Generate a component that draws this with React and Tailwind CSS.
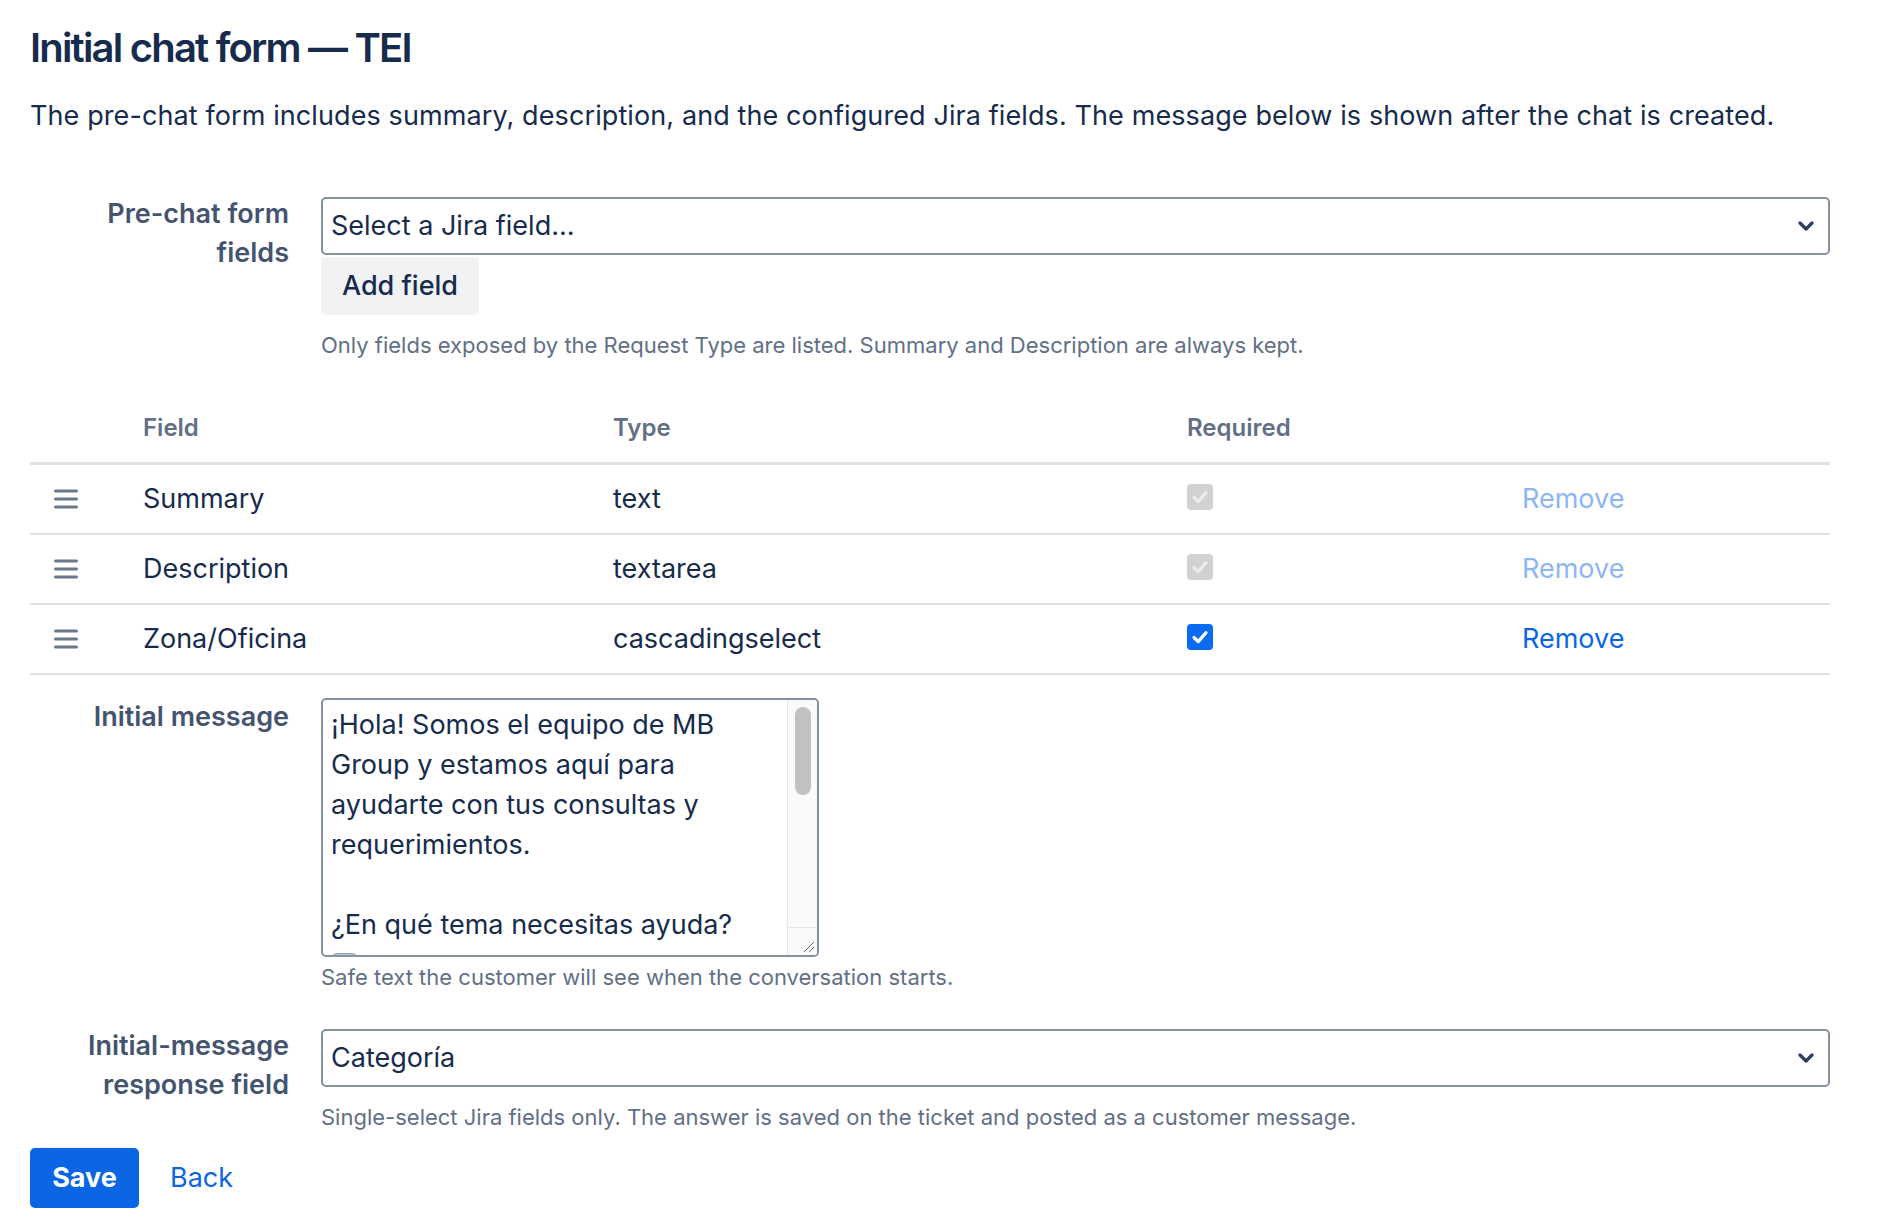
import { useState } from "react";

const fields = [
  { name: "Summary", type: "text", locked: true },
  { name: "Description", type: "textarea", locked: true },
  { name: "Zona/Oficina", type: "cascadingselect", locked: false },
];

const messageLines = [
  "¡Hola! Somos el equipo de MB",
  "Group y estamos aquí para",
  "ayudarte con tus consultas y",
  "requerimientos.",
  "",
  "¿En qué tema necesitas ayuda?",
];

const Chevron = () => (
  <svg width="16" height="10" viewBox="0 0 16 10" fill="none" className="pointer-events-none absolute right-[16px] top-1/2 -translate-y-1/2">
    <path d="M2 2L8 8L14 2" stroke="#2c3e5d" strokeWidth="3.2" strokeLinecap="round" strokeLinejoin="round" />
  </svg>
);

const DragHandle = () => (
  <svg width="24" height="20" viewBox="0 0 24 20" fill="none">
    <path d="M1.5 2H22.5M1.5 10H22.5M1.5 18H22.5" stroke="#6b778c" strokeWidth="3" strokeLinecap="round" />
  </svg>
);

const CheckBox = ({ locked }) => (
  <span
    className={
      locked
        ? "mb-[4px] flex h-[26px] w-[26px] items-center justify-center rounded-[4px] bg-[#d2d2d2]"
        : "mb-[4px] flex h-[26px] w-[26px] items-center justify-center rounded-[4px] bg-[#0b6bf0]"
    }
  >
    <svg width="20" height="20" viewBox="0 0 20 20" fill="none">
      <path d="M4 10.5L8.2 14.6L16 5.6" stroke={locked ? "#ececec" : "#ffffff"} strokeWidth="3.2" strokeLinecap="round" strokeLinejoin="round" />
    </svg>
  </span>
);

const SelectBox = ({ value, options }) => (
  <div className="relative">
    <select
      defaultValue={value}
      className="h-[58px] w-full appearance-none rounded-[5px] border-2 border-[#8590a2] bg-white pl-[8px] pr-[48px] text-[27px] leading-[40px] text-[#172b4d] outline-none"
    >
      {options.map((o) => (
        <option key={o} value={o}>
          {o}
        </option>
      ))}
    </select>
    <Chevron />
  </div>
);

export default function App() {
  const [rows] = useState(fields);

  return (
    <div className="min-h-screen bg-white font-['Inter','Liberation_Sans',sans-serif] text-[#172b4d]">
      <div className="w-[1830px] pl-[30px] pt-[24px]">
        <h1 className="text-[40px] font-semibold leading-[48px] tracking-[-1.8px] text-[#172b4d]">Initial chat form — TEI</h1>
        <p className="mt-[24px] text-[27px] leading-[40px] tracking-[0.1px]">
          The pre-chat form includes summary, description, and the configured Jira fields. The message below is shown after the chat is created.
        </p>

        {/* Pre-chat fields */}
        <div className="mt-[58px] flex gap-[32px]">
          <label className="w-[259px] shrink-0 text-right text-[27px] font-semibold leading-[39px] text-[#44546f]">
            Pre-chat form fields
          </label>
          <div className="flex-1 pt-[3px]">
            <SelectBox value="" options={["Select a Jira field...", "Categoría", "Zona/Oficina"]} />
            <button className="mt-[2px] h-[58px] w-[158px] rounded-[5px] bg-[#f1f2f4] text-[27px] font-medium text-[#172b4d]">
              Add field
            </button>
            <p className="mt-[14px] text-[22px] leading-[32px] text-[#626f86]">
              Only fields exposed by the Request Type are listed. Summary and Description are always kept.
            </p>
          </div>
        </div>

        {/* Field table */}
        <div className="mt-[51px] w-[1800px]">
          <div className="grid grid-cols-[113px_470px_574px_335px_1fr] border-b-[3px] border-[#dfe1e6] pb-[18px] text-[24px] font-semibold leading-[32px] text-[#626f86]">
            <span />
            <span>Field</span>
            <span>Type</span>
            <span>Required</span>
            <span />
          </div>
          {rows.map((r) => (
            <div
              key={r.name}
              className="grid h-[70px] grid-cols-[113px_470px_574px_335px_1fr] items-center border-b-2 border-[#dfe1e6] text-[27px] leading-[40px]"
            >
              <span className="pl-[24px]">
                <DragHandle />
              </span>
              <span>{r.name}</span>
              <span>{r.type}</span>
              <span>
                <CheckBox locked={r.locked} />
              </span>
              <button
                disabled={r.locked}
                className={r.locked ? "text-left text-[#8db6f4]" : "text-left text-[#0c66e4]"}
              >
                Remove
              </button>
            </div>
          ))}
        </div>

        {/* Initial message */}
        <div className="mt-[22px] flex gap-[32px]">
          <label className="w-[259px] shrink-0 text-right text-[27px] font-semibold leading-[39px] text-[#44546f]">
            Initial message
          </label>
          <div className="flex-1 pt-[1px]">
            <div className="flex h-[259px] w-[498px] overflow-hidden rounded-[5px] border-2 border-[#8590a2] bg-white">
              <div className="flex-1 overflow-hidden whitespace-pre pl-[8px] pt-[5px] text-[27px] leading-[40px] text-[#172b4d]">
                {messageLines.map((l, i) => (
                  <div key={i} className="h-[40px]">
                    {l}
                  </div>
                ))}
                <div className="h-[40px] pt-[8px]">
                  <span className="block h-[27px] w-[27px] rounded-[6px] border border-[#8fa0b6] bg-[#b9c6d6]" />
                </div>
              </div>
              <div className="flex w-[30px] flex-col border-l border-[#e6e6e6] bg-[#fafafa]">
                <div className="mx-auto mt-[7px] h-[88px] w-[16px] rounded-full bg-[#c1c1c1]" />
                <div className="flex-1" />
                <div className="relative h-[28px] border-t border-[#e6e6e6]">
                  <svg width="14" height="14" viewBox="0 0 14 14" className="absolute bottom-[2px] right-[2px]">
                    <path d="M13 3L3 13M13 8L8 13" stroke="#6b6b6b" strokeWidth="1" />
                  </svg>
                </div>
              </div>
            </div>
            <p className="mt-[4px] text-[22px] leading-[32px] text-[#626f86]">Safe text the customer will see when the conversation starts.</p>
          </div>
        </div>

        {/* Response field */}
        <div className="mt-[33px] flex gap-[32px]">
          <label className="w-[259px] shrink-0 text-right text-[27px] font-semibold leading-[39px] text-[#44546f]">
            Initial-message response field
          </label>
          <div className="flex-1 pt-[3px]">
            <SelectBox value="Categoría" options={["Categoría", "Zona/Oficina"]} />
            <p className="mt-[14px] text-[22px] leading-[32px] text-[#626f86]">
              Single-select Jira fields only. The answer is saved on the ticket and posted as a customer message.
            </p>
          </div>
        </div>

        <div className="mt-[15px] flex items-center gap-[31px]">
          <button className="h-[60px] w-[109px] rounded-[5px] bg-[#0c66e4] text-[27px] font-bold text-white">Save</button>
          <a href="#" className="text-[27px] text-[#0c66e4]">
            Back
          </a>
        </div>
      </div>
    </div>
  );
}
